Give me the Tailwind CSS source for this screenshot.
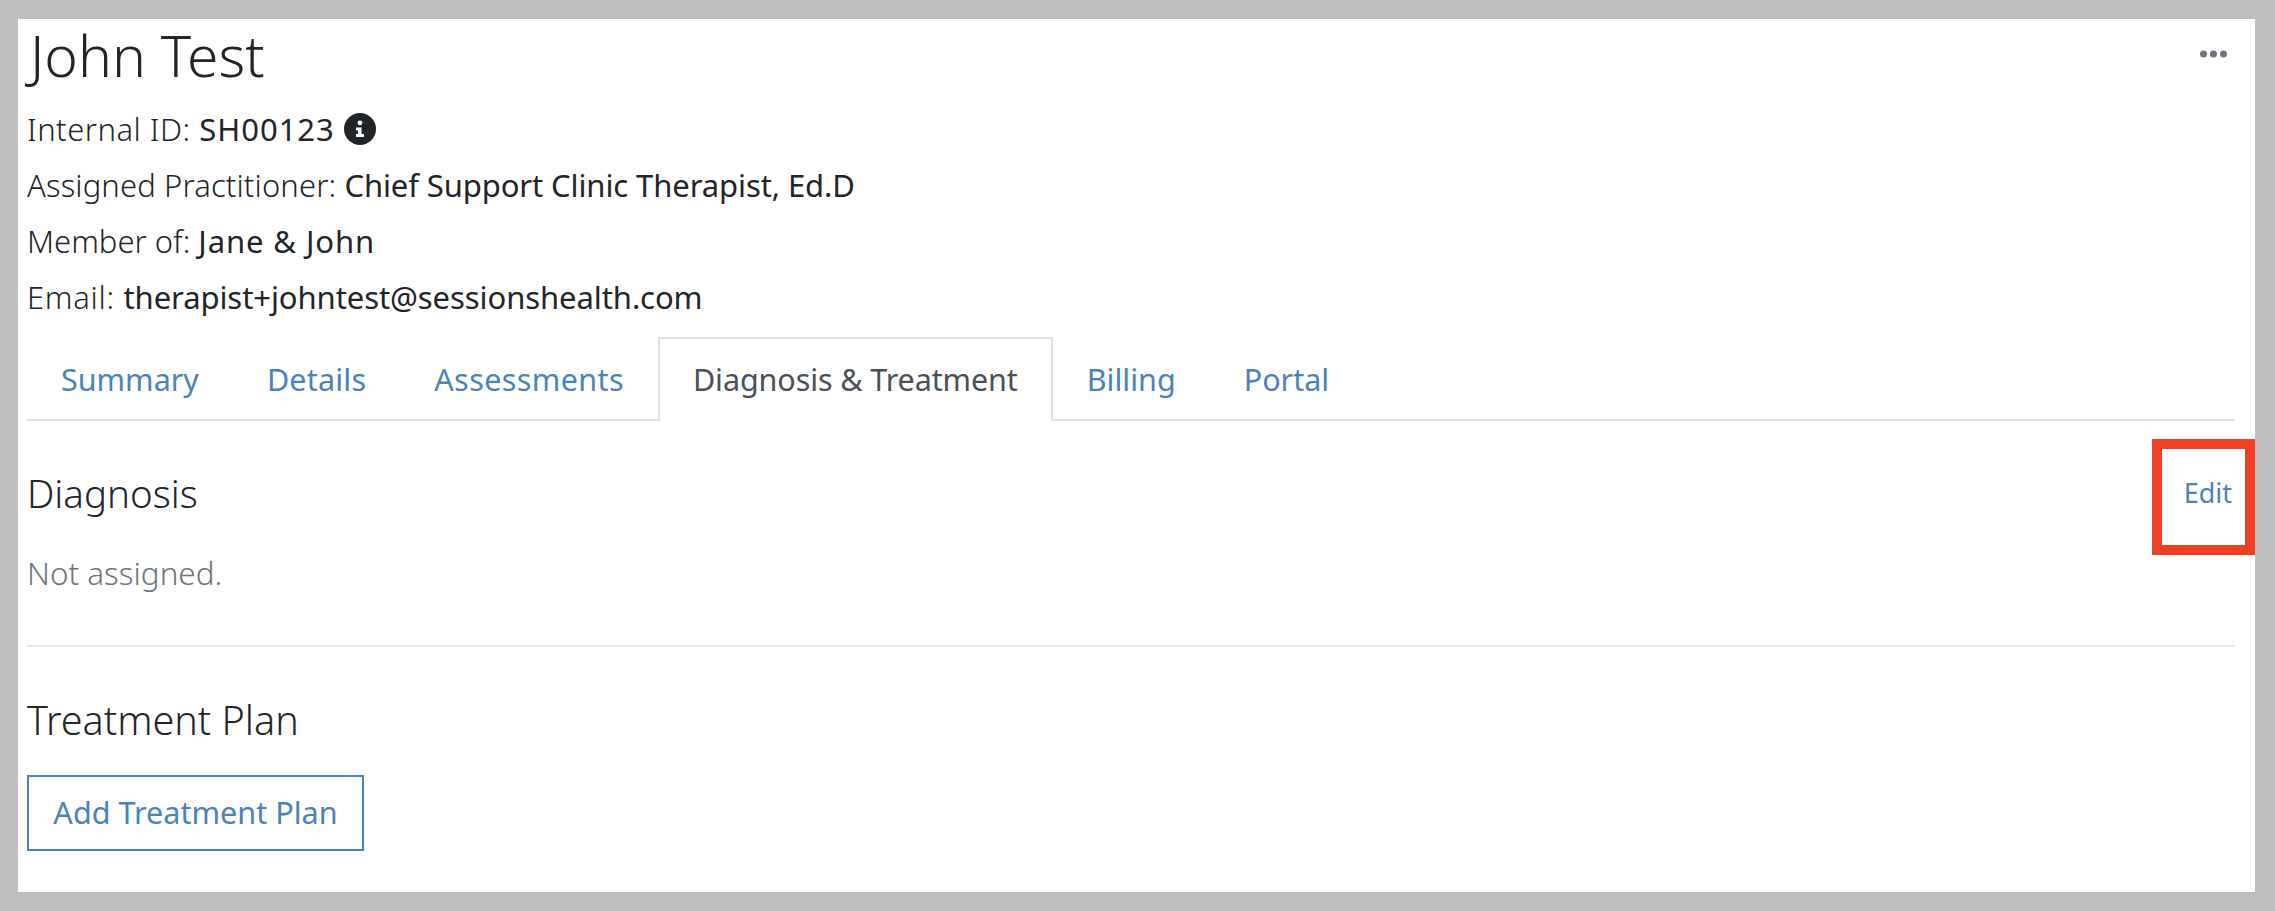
<!DOCTYPE html>
<html lang="en">
<head>
  <meta charset="UTF-8" />
  <title>John Test</title>
  <script src="https://cdn.jsdelivr.net/npm/@tailwindcss/browser@4"></script>
</head>
<body class="bg-[#bdbdbd] font-['Noto_Sans',sans-serif] text-[#212529] overflow-hidden">
  <div class="pt-[19px] pl-[18px] pr-[20px] h-[911px]">
    <div class="relative bg-white h-[873px] pl-[9px] pr-[20px]">
      <!-- header -->
      <div class="flex justify-between">
        <h1 class="text-[57px] leading-[72px] font-light ml-[3px]">John Test</h1>
        <svg class="mt-[31px] mr-[8px]" width="27" height="8" viewBox="0 0 27 8" fill="#6c757d"><circle cx="3.5" cy="4" r="3.5"/><circle cx="13.5" cy="4" r="3.5"/><circle cx="23.5" cy="4" r="3.5"/></svg>
      </div>
      <div class="text-[31px] leading-[56px] mt-[10px] font-light">
        <div class="flex items-center gap-[9px]">
          <p class="tracking-[0.5px]">Internal ID: <span class="font-normal tracking-[1px]">SH00123</span></p>
          <svg width="32" height="32" viewBox="0 0 32 32"><circle cx="16" cy="16" r="16" fill="#212529"/><circle cx="16" cy="9.8" r="2.4" fill="#fff"/><path d="M12 14.5h5.5v6.5H20v3h-8v-3h2v-3.5h-2z" fill="#fff"/></svg>
        </div>
        <p class="tracking-[0.13px]">Assigned Practitioner: <span class="font-normal tracking-[-0.1px]">Chief Support Clinic Therapist, Ed.D</span></p>
        <p>Member of: <span class="font-normal tracking-[0.9px]">Jane &amp; John</span></p>
        <p class="tracking-[0.7px]">Email: <span class="font-normal tracking-[-0.08px]">therapist+johntest@sessionshealth.com</span></p>
      </div>
      <!-- tabs -->
      <nav class="flex h-[84px] mt-[12px] border-b-[2px] border-[#dee2e6] text-[30.5px] leading-[42px]">
        <a class="px-[34px] pt-[21px] text-[#4a83b9]">Summary</a>
        <a class="px-[34px] pt-[21px] text-[#4a83b9] tracking-[0.2px]">Details</a>
        <a class="px-[34px] pt-[21px] text-[#4a83b9] tracking-[0.4px]">Assessments</a>
        <a class="px-[33px] pt-[19px] h-[84px] bg-white border-x-[2px] border-t-[2px] border-[#dee2e6] text-[#495057] tracking-[-0.1px]">Diagnosis &amp; Treatment</a>
        <a class="px-[34px] pt-[21px] text-[#4a83b9]">Billing</a>
        <a class="px-[34px] pt-[21px] text-[#4a83b9]">Portal</a>
      </nav>
      <!-- diagnosis -->
      <div class="flex justify-between items-center mt-[49px]">
        <h3 class="text-[38.5px] leading-[46px] font-light">Diagnosis</h3>
        <a class="text-[27px] leading-[32px] text-[#4a83b9] mr-[3px]">Edit</a>
      </div>
      <p class="text-[31.4px] leading-[32px] mt-[41px] text-[#6c757d] font-light">Not assigned.</p>
      <hr class="mt-[56px] border-t-[2px] border-[#e5e7e9]" />
      <!-- treatment plan -->
      <h3 class="text-[39.5px] leading-[46px] font-light mt-[50px]">Treatment Plan</h3>
      <a class="flex items-center justify-center mt-[32px] w-[337px] h-[76px] border-[2px] border-[#4a83b9] text-[30.6px] text-[#4a83b9]">Add Treatment Plan</a>
      <!-- red annotation round the edit link -->
      <div class="absolute left-[2134px] top-[420px] w-[103px] h-[116px] border-[10px] border-[#ec4124]"></div>
    </div>
  </div>
</body>
</html>
